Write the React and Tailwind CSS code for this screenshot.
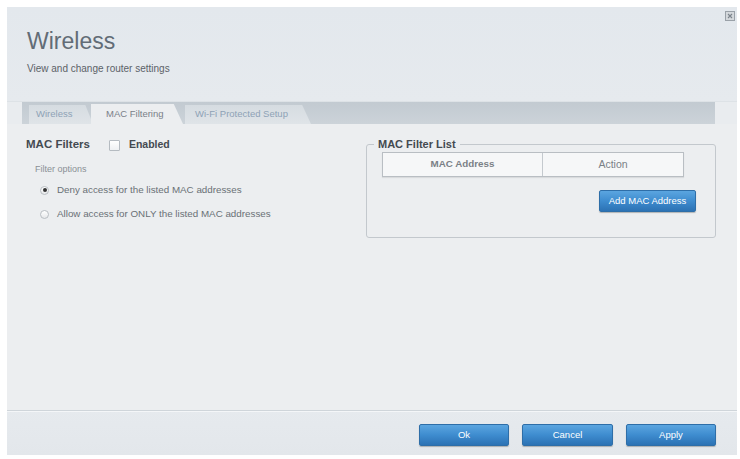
import React from "react";

function Btn({ children, className = "" }) {
  return (
    <button
      className={
        "h-[22px] rounded-[2px] border border-[#2e6ea8] bg-gradient-to-b from-[#5ba5e0] via-[#3e8ccf] to-[#2c72b4] text-white text-[9.5px] shadow-[0_1px_1px_rgba(0,0,0,0.25)] " +
        className
      }
    >
      {children}
    </button>
  );
}

function Radio({ checked }) {
  return (
    <span className="w-[9px] h-[9px] rounded-full border border-[#b9bec3] bg-gradient-to-b from-white to-[#e6e8ea] flex items-center justify-center">
      {checked && <span className="w-[4px] h-[4px] rounded-full bg-[#333]" />}
    </span>
  );
}

export default function App() {
  return (
    <div className="w-[740px] h-[459px] bg-white pt-[7px] pl-[7px] pr-[3px] pb-[4px] font-['Liberation_Sans',Arial,sans-serif]">
      <div className="relative h-[448px] flex flex-col bg-[#e9ecef]">
        {/* close icon */}
        <svg
          className="absolute right-[2px] top-[4px]"
          width="10"
          height="10"
          viewBox="0 0 10 10"
        >
          <rect x="0.5" y="0.5" width="9" height="9" fill="#d4d8dc" stroke="#9aa1a8" />
          <path d="M3 3 L7 7 M7 3 L3 7" stroke="#7c848c" strokeWidth="1.1" />
        </svg>

        {/* header */}
        <div className="h-[95px] px-[20px] pt-[20px] bg-gradient-to-b from-[#e3e8ed] to-[#e6eaee] border-b border-[#dde2e6]">
          <div className="text-[23px] leading-[28px] text-[#626c76]">Wireless</div>
          <div className="mt-[8px] text-[10px] leading-[12px] text-[#5c6268]">
            View and change router settings
          </div>
        </div>

        {/* tab strip */}
        <div className="ml-[15px] mr-[22px] h-[22px] flex items-end bg-gradient-to-b from-[#c2cad1] to-[#ccd3d9]">
          <div className="ml-[7px] h-[19px] w-[64px] flex items-center pl-[7px] text-[9.5px] text-[#8ea2b6] bg-gradient-to-b from-[#d6dce1] to-[#dfe4e8] [clip-path:polygon(0_0,88%_0,100%_100%,0_100%)]">
            Wireless
          </div>
          <div className="-ml-[2px] h-[20px] w-[92px] flex items-center pl-[15px] text-[9.5px] text-[#7a8088] bg-[#eceef0] [clip-path:polygon(0_0,90%_0,100%_100%,0_100%)]">
            MAC Filtering
          </div>
          <div className="ml-[2px] h-[19px] w-[126px] flex items-center pl-[10px] text-[9.5px] text-[#8ea2b6] bg-gradient-to-b from-[#d6dce1] to-[#dfe4e8] [clip-path:polygon(0_0,93%_0,100%_100%,0_100%)]">
            Wi-Fi Protected Setup
          </div>
        </div>

        {/* content */}
        <div className="flex-1 flex bg-[#eceef0]">
          <div className="flex-1 pl-[19px] pt-[15px]">
            <div className="h-[12px] flex items-center">
              <span className="text-[11.5px] font-bold text-[#444a50]">MAC Filters</span>
              <span className="ml-[19px] w-[11px] h-[11px] border border-[#b5bbc1] bg-gradient-to-b from-white to-[#eef0f2] rounded-[1px]" />
              <span className="ml-[9px] text-[10.5px] font-bold text-[#444a50]">Enabled</span>
            </div>
            <div className="mt-[13px] ml-[9px] text-[9px] leading-[10px] text-[#8a9096]">Filter options</div>
            <div className="mt-[11px] ml-[14px] h-[10px] flex items-center gap-[8px]">
              <Radio checked />
              <span className="text-[9.8px] text-[#6a7076]">Deny access for the listed MAC addresses</span>
            </div>
            <div className="mt-[14px] ml-[14px] h-[10px] flex items-center gap-[8px]">
              <Radio />
              <span className="text-[9.8px] text-[#6a7076]">Allow access for ONLY the listed MAC addresses</span>
            </div>
          </div>

          <div className="w-[350px] mr-[21px] pt-[14px]">
            <fieldset className="h-[100px] border border-[#c3c8cd] rounded-[3px] px-[15px] pb-[10px]">
              <legend className="-ml-[8px] px-[4px] text-[11px] leading-[12px] font-bold text-[#444a50]">
                MAC Filter List
              </legend>
              <div className="mt-[2px] w-[302px] h-[25px] flex border border-[#b9bec3] bg-[#f6f7f8] shadow-[0_1px_1px_rgba(0,0,0,0.08)]">
                <div className="w-[160px] border-r border-[#c4c9ce] flex items-center justify-center text-[9.8px] font-bold text-[#7a8086]">
                  MAC Address
                </div>
                <div className="flex-1 flex items-center justify-center text-[10.5px] text-[#7a8086]">Action</div>
              </div>
              <div className="mt-[13px] flex justify-end pr-[4px]">
                <Btn className="w-[97px]">Add MAC Address</Btn>
              </div>
            </fieldset>
          </div>
        </div>

        {/* footer */}
        <div className="h-[45px] border-t border-[#cfd5da] shadow-[inset_0_1px_0_#f4f6f8] bg-gradient-to-b from-[#e6eaee] to-[#e3e7eb] flex justify-end gap-[13px] pr-[21px] pt-[13px]">
          <Btn className="w-[90px]">Ok</Btn>
          <Btn className="w-[91px]">Cancel</Btn>
          <Btn className="w-[90px]">Apply</Btn>
        </div>
      </div>
    </div>
  );
}
